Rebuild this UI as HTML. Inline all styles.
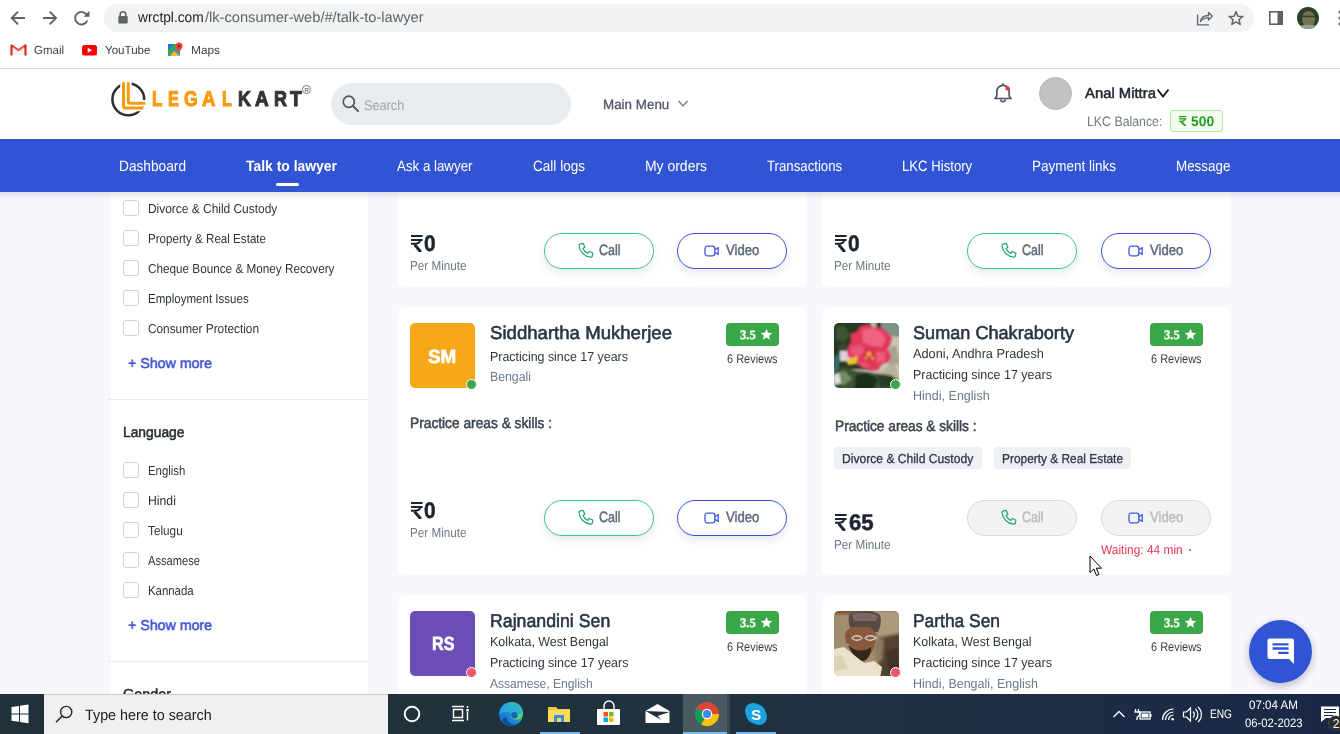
<!DOCTYPE html>
<html><head><meta charset="utf-8"><style>
html,body{margin:0;padding:0;width:1340px;height:734px;overflow:hidden;background:#f8f7fe;position:relative}
.t{position:absolute;white-space:nowrap;transform-origin:0 0;text-rendering:geometricPrecision}
.a{position:absolute}
</style></head><body>
<div style="position:absolute;left:0;top:0;width:1340px;height:68px;background:#fff"></div>
<div style="position:absolute;left:0;top:68px;width:1340px;height:1px;background:#d6d7d9"></div>
<div style="position:absolute;left:104px;top:4px;width:1150px;height:28px;border-radius:14px;background:#f1f3f4"></div>
<svg style="position:absolute;left:0;top:0" width="100" height="36" viewBox="0 0 100 36">
<g fill="none" stroke="#5f6368" stroke-width="1.9" stroke-linecap="butt">
<path d="M25 18H12.5 M18 11.7L11.7 18L18 24.3"/>
<path d="M43 18H55.5 M49.7 11.7L56 18L49.7 24.3"/>
<path d="M87.5 16.5A6.3 6.3 0 1 0 87.3 20.5"/>
</g>
<path d="M89.5 10.8V16.8H83.5Z" fill="#5f6368"/>
</svg>
<svg style="position:absolute;left:116px;top:10px" width="14" height="16" viewBox="0 0 14 16">
<path d="M4.2 6V4.6A2.8 2.8 0 0 1 9.8 4.6V6" fill="none" stroke="#5f6368" stroke-width="1.6"/>
<rect x="2.3" y="6" width="9.4" height="7.4" rx="1" fill="#5f6368"/></svg>
<div class="t" style="left:138.37px;top:11.48px;font:normal 14.50px/1 'Liberation Sans',sans-serif;color:#202124;transform:scaleX(0.9484);">wrctpl.com</div>
<div class="t" style="left:205.00px;top:11.48px;font:normal 14.50px/1 'Liberation Sans',sans-serif;color:#5f6368;transform:scaleX(1.0084);">/lk-consumer-web/#/talk-to-lawyer</div>
<svg style="position:absolute;left:1190px;top:0px" width="150" height="36" viewBox="1190 0 150 36">
<g fill="none" stroke="#5f6368" stroke-width="1.3">
<path d="M1197.6 14.5V24.8H1209"/>
<path d="M1200.3 21.5C1201 17.5 1204 15.5 1208.5 15.5V12.5L1212.3 16.3L1208.5 20V17.6C1205 17.6 1202.5 19 1200.3 21.5Z" stroke-linejoin="round"/>
</g>
<path d="M1236 11.6L1237.9 16.2L1242.8 16.5L1239 19.6L1240.2 24.4L1236 21.8L1231.8 24.4L1233 19.6L1229.2 16.5L1234.1 16.2Z" fill="none" stroke="#5f6368" stroke-width="1.5" stroke-linejoin="round"/>
<rect x="1269.8" y="11.8" width="12.4" height="12.4" fill="none" stroke="#5f6368" stroke-width="1.6"/>
<rect x="1277.5" y="11" width="5.5" height="14" fill="#5f6368"/>
<defs><clipPath id="pc"><circle cx="1308" cy="18" r="11"/></clipPath></defs>
<g clip-path="url(#pc)">
<rect x="1296" y="6" width="24" height="24" fill="#2c3f27"/>
<ellipse cx="1308.5" cy="19" rx="6.5" ry="8" fill="#76714f"/>
<path d="M1302 16.5H1315" stroke="#34402c" stroke-width="1.4"/>
<path d="M1297 27C1302 24 1314 24 1319 27V30H1297Z" fill="#8fa294"/>
</g>
<circle cx="1340" cy="12" r="1.6" fill="#5f6368"/><circle cx="1340" cy="18" r="1.6" fill="#5f6368"/><circle cx="1340" cy="24" r="1.6" fill="#5f6368"/>
</svg>
<svg style="position:absolute;left:8px;top:40px" width="190" height="20" viewBox="0 0 190 20">
<path d="M3.5 15.5V5.5L10.5 10.5L17.5 5.5V15.5" fill="none" stroke="#d93025" stroke-width="2.2" stroke-linejoin="round"/>
<path d="M5 6.5L10.5 10.5L16 6.5V15H5Z" fill="#e8e8e8" opacity="0.6"/>
<rect x="74" y="5" width="15" height="10.5" rx="2.5" fill="#ff0000"/>
<path d="M79.7 7.8V12.7L84 10.25Z" fill="#fff"/>
<path d="M160 4L172 4L172 16L160 16Z" fill="#34a853"/>
<path d="M160 16L167 9L172 14V16Z" fill="#4285f4"/>
<path d="M160 4L166 4L160 10Z" fill="#1a73e8"/>
<path d="M166 11L172 16H162Z" fill="#fbbc04"/>
<path d="M171 2.5A3.5 3.5 0 0 1 174.5 6C174.5 8.5 171 12 171 12S167.5 8.5 167.5 6A3.5 3.5 0 0 1 171 2.5Z" fill="#ea4335"/>
<circle cx="171" cy="6" r="1.2" fill="#a50e0e"/>
</svg>
<div class="t" style="left:34.30px;top:45.27px;font:normal 11.80px/1 'Liberation Sans',sans-serif;color:#3c4043;transform:scaleX(0.9741);">Gmail</div>
<div class="t" style="left:105.00px;top:45.27px;font:normal 11.80px/1 'Liberation Sans',sans-serif;color:#3c4043;transform:scaleX(0.9812);">YouTube</div>
<div class="t" style="left:191.00px;top:45.27px;font:normal 11.80px/1 'Liberation Sans',sans-serif;color:#3c4043;transform:scaleX(1.0052);">Maps</div>
<div class="a" style="left:0;top:69px;width:1340px;height:70px;background:#fff"></div>
<svg class="a" style="left:105px;top:76px" width="45" height="46" viewBox="105 76 45 46">
<circle cx="128.3" cy="99.3" r="15.9" fill="none" stroke="#303030" stroke-width="2.5"/>
<g fill="none" stroke="#fff" stroke-width="6.5" stroke-linejoin="round">
<path d="M123.5 80V108.1H143.5"/>
<path d="M128.3 80V103.3H146"/>
</g>
<g fill="none" stroke="#fb9a0e" stroke-width="3">
<path d="M123.5 82.3V106.1Q123.5 108.1 125.5 108.1H143.2"/>
<path d="M128.3 82.3V101.3Q128.3 103.3 130.3 103.3H145.4"/>
</g>
</svg>
<div class="t" style="left:151.85px;top:88.93px;font:bold 21.50px/1 'Liberation Sans',sans-serif;color:#fb9a0e;transform:scaleX(0.7930);-webkit-text-stroke:1.1px #fb9a0e;">L</div>
<div class="t" style="left:167.75px;top:88.93px;font:bold 21.50px/1 'Liberation Sans',sans-serif;color:#fb9a0e;transform:scaleX(0.7484);-webkit-text-stroke:1.1px #fb9a0e;">E</div>
<div class="t" style="left:183.55px;top:88.93px;font:bold 21.50px/1 'Liberation Sans',sans-serif;color:#fb9a0e;transform:scaleX(0.8110);-webkit-text-stroke:1.1px #fb9a0e;">G</div>
<div class="t" style="left:202.05px;top:88.93px;font:bold 21.50px/1 'Liberation Sans',sans-serif;color:#fb9a0e;transform:scaleX(0.8656);-webkit-text-stroke:1.1px #fb9a0e;">A</div>
<div class="t" style="left:221.55px;top:88.93px;font:bold 21.50px/1 'Liberation Sans',sans-serif;color:#fb9a0e;transform:scaleX(0.7472);-webkit-text-stroke:1.1px #fb9a0e;">L</div>
<div class="t" style="left:237.55px;top:88.93px;font:bold 21.50px/1 'Liberation Sans',sans-serif;color:#333333;transform:scaleX(0.8333);-webkit-text-stroke:1.1px #333333;">K</div>
<div class="t" style="left:254.55px;top:88.93px;font:bold 21.50px/1 'Liberation Sans',sans-serif;color:#333333;transform:scaleX(0.8786);-webkit-text-stroke:1.1px #333333;">A</div>
<div class="t" style="left:273.55px;top:88.93px;font:bold 21.50px/1 'Liberation Sans',sans-serif;color:#333333;transform:scaleX(0.8333);-webkit-text-stroke:1.1px #333333;">R</div>
<div class="t" style="left:290.15px;top:88.93px;font:bold 21.50px/1 'Liberation Sans',sans-serif;color:#333333;transform:scaleX(0.8845);-webkit-text-stroke:1.1px #333333;">T</div>
<svg class="a" style="left:301px;top:84px" width="11" height="11" viewBox="0 0 11 11"><circle cx="5.4" cy="5.5" r="4" fill="none" stroke="#444" stroke-width="0.7"/><text x="5.5" y="7.7" font-size="5.8" font-family="Liberation Sans" text-anchor="middle" fill="#444">R</text></svg>
<div class="a" style="left:331px;top:83px;width:240px;height:42px;border-radius:21px;background:#e9ecef"></div>
<svg class="a" style="left:340px;top:93px" width="22" height="22" viewBox="0 0 22 22"><circle cx="8.8" cy="8.8" r="5.6" fill="none" stroke="#4b5563" stroke-width="1.7"/><path d="M13 13L18 18" stroke="#4b5563" stroke-width="1.8" stroke-linecap="round"/></svg>
<div class="t" style="left:364.20px;top:98.10px;font:normal 14.00px/1 'Liberation Sans',sans-serif;color:#9ca3ab;transform:scaleX(0.9081);">Search</div>
<div class="t" style="left:603.00px;top:98.34px;font:normal 13.60px/1 'Liberation Sans',sans-serif;color:#4a5361;transform:scaleX(0.9858);font-weight:normal;-webkit-text-stroke:0.25px #4a5361;">Main Menu</div>
<svg class="a" style="left:676px;top:98px" width="14" height="12" viewBox="0 0 14 12"><path d="M2.5 3L7 7.8L11.5 3" fill="none" stroke="#6b7280" stroke-width="1.2"/></svg>
<svg class="a" style="left:990px;top:80px" width="26" height="26" viewBox="0 0 26 26">
<path d="M5 18.5H21L19.2 16.2V11.5A6.2 6.2 0 0 0 6.8 11.5V16.2Z" fill="none" stroke="#4b5563" stroke-width="1.7" stroke-linejoin="round"/>
<path d="M10.8 19.5A2.2 2.2 0 0 0 15.2 19.5" fill="none" stroke="#4b5563" stroke-width="1.6"/>
<path d="M13 3.2V5" stroke="#4b5563" stroke-width="1.6"/>
<circle cx="17.6" cy="8.4" r="2.2" fill="#e53945"/>
</svg>
<div class="a" style="left:1039px;top:77px;width:31px;height:31px;border-radius:50%;background:#c2c2c4;border:1px solid #b5b5b8"></div>
<div class="t" style="left:1085.00px;top:87.27px;font:normal 14.50px/1 'Liberation Sans',sans-serif;color:#1f2733;transform:scaleX(1.0233);-webkit-text-stroke:0.5px #1f2733;">Anal Mittra</div>
<svg class="a" style="left:1155px;top:86px" width="16" height="14" viewBox="0 0 16 14"><path d="M2.5 3.5L8 10.5L13.5 3.5" fill="none" stroke="#111" stroke-width="1.8"/></svg>
<div class="t" style="left:1086.60px;top:115.27px;font:normal 13.80px/1 'Liberation Sans',sans-serif;color:#737b86;transform:scaleX(0.8935);">LKC Balance:</div>
<div class="a" style="left:1170px;top:110px;width:51px;height:20px;border-radius:3px;border:1px solid #b2e9a0;background:#f5fdf0"></div>
<svg class="a" style="left:1178.8px;top:116px" width="8" height="10" viewBox="0 0 8 10">
<path d="M0 0.6H7.3M0 2.9H7.3" stroke="#2a9a16" stroke-width="1.2"/>
<path d="M0 5.3H2.5C4.5 5.3 5.6 4.4 5.7 2.9" fill="none" stroke="#2a9a16" stroke-width="1.2"/>
<path d="M2.2 5.8L6.6 10" stroke="#2a9a16" stroke-width="1.8"/>
</svg>
<div class="t" style="left:1191.00px;top:114.10px;font:bold 14.00px/1 'Liberation Sans',sans-serif;color:#279d1e;transform:scaleX(0.9880);">500</div>
<div class="a" style="left:111px;top:192px;width:257px;height:502px;background:#fff"></div>
<div class="a" style="left:123px;top:200px;width:14px;height:14px;border:1px solid #cfd2d6;border-radius:3px;background:#fff"></div>
<div class="t" style="left:148.00px;top:201.95px;font:normal 13.00px/1 'Liberation Sans',sans-serif;color:#2d333a;transform:scaleX(0.9175);">Divorce &amp; Child Custody</div>
<div class="a" style="left:123px;top:230px;width:14px;height:14px;border:1px solid #cfd2d6;border-radius:3px;background:#fff"></div>
<div class="t" style="left:148.00px;top:231.95px;font:normal 13.00px/1 'Liberation Sans',sans-serif;color:#2d333a;transform:scaleX(0.8925);">Property &amp; Real Estate</div>
<div class="a" style="left:123px;top:260px;width:14px;height:14px;border:1px solid #cfd2d6;border-radius:3px;background:#fff"></div>
<div class="t" style="left:148.00px;top:261.95px;font:normal 13.00px/1 'Liberation Sans',sans-serif;color:#2d333a;transform:scaleX(0.9023);">Cheque Bounce &amp; Money Recovery</div>
<div class="a" style="left:123px;top:290px;width:14px;height:14px;border:1px solid #cfd2d6;border-radius:3px;background:#fff"></div>
<div class="t" style="left:148.00px;top:291.95px;font:normal 13.00px/1 'Liberation Sans',sans-serif;color:#2d333a;transform:scaleX(0.8878);">Employment Issues</div>
<div class="a" style="left:123px;top:320px;width:14px;height:14px;border:1px solid #cfd2d6;border-radius:3px;background:#fff"></div>
<div class="t" style="left:148.00px;top:321.95px;font:normal 13.00px/1 'Liberation Sans',sans-serif;color:#2d333a;transform:scaleX(0.9088);">Consumer Protection</div>
<div class="t" style="left:128.00px;top:356.93px;font:normal 14.20px/1 'Liberation Sans',sans-serif;color:#3d4fd6;-webkit-text-stroke:0.45px #3d4fd6;">+ Show more</div>
<div class="a" style="left:108px;top:399px;width:262px;height:1px;background:#ececef"></div>
<div class="t" style="left:123.00px;top:425.68px;font:normal 14.50px/1 'Liberation Sans',sans-serif;color:#262b33;transform:scaleX(0.9531);-webkit-text-stroke:0.5px #262b33;">Language</div>
<div class="a" style="left:123px;top:462px;width:14px;height:14px;border:1px solid #cfd2d6;border-radius:3px;background:#fff"></div>
<div class="t" style="left:147.70px;top:463.95px;font:normal 13.00px/1 'Liberation Sans',sans-serif;color:#2d333a;transform:scaleX(0.8748);">English</div>
<div class="a" style="left:123px;top:492px;width:14px;height:14px;border:1px solid #cfd2d6;border-radius:3px;background:#fff"></div>
<div class="t" style="left:147.70px;top:493.95px;font:normal 13.00px/1 'Liberation Sans',sans-serif;color:#2d333a;transform:scaleX(0.9413);">Hindi</div>
<div class="a" style="left:123px;top:522px;width:14px;height:14px;border:1px solid #cfd2d6;border-radius:3px;background:#fff"></div>
<div class="t" style="left:147.70px;top:523.95px;font:normal 13.00px/1 'Liberation Sans',sans-serif;color:#2d333a;transform:scaleX(0.9064);">Telugu</div>
<div class="a" style="left:123px;top:552px;width:14px;height:14px;border:1px solid #cfd2d6;border-radius:3px;background:#fff"></div>
<div class="t" style="left:147.70px;top:553.95px;font:normal 13.00px/1 'Liberation Sans',sans-serif;color:#2d333a;transform:scaleX(0.8565);">Assamese</div>
<div class="a" style="left:123px;top:582px;width:14px;height:14px;border:1px solid #cfd2d6;border-radius:3px;background:#fff"></div>
<div class="t" style="left:147.70px;top:583.95px;font:normal 13.00px/1 'Liberation Sans',sans-serif;color:#2d333a;transform:scaleX(0.8767);">Kannada</div>
<div class="t" style="left:128.00px;top:618.93px;font:normal 14.20px/1 'Liberation Sans',sans-serif;color:#3d4fd6;-webkit-text-stroke:0.45px #3d4fd6;">+ Show more</div>
<div class="a" style="left:108px;top:661px;width:262px;height:1px;background:#ececef"></div>
<div class="t" style="left:123.00px;top:687.67px;font:normal 14.50px/1 'Liberation Sans',sans-serif;color:#262b33;transform:scaleX(0.9926);-webkit-text-stroke:0.5px #262b33;">Gender</div>
<div class="a" style="left:398px;top:150px;width:409px;height:137px;background:#fff;border-radius:7px"></div>
<div class="a" style="left:822px;top:150px;width:409px;height:137px;background:#fff;border-radius:7px"></div>
<svg class="a" style="left:411.2px;top:235px" width="12" height="17" viewBox="0 0 12 17">
<path d="M0 1H11.6M0 4.9H11.6" stroke="#1c2530" stroke-width="2"/>
<path d="M0 8.8H4C7 8.8 9 7.6 9.2 4.9" fill="none" stroke="#1c2530" stroke-width="2"/>
<path d="M3.6 9.6L9.8 17" stroke="#1c2530" stroke-width="3"/>
</svg>
<div class="t" style="left:424.20px;top:233.38px;font:bold 22.50px/1 'Liberation Sans',sans-serif;color:#1c2530;transform:scaleX(0.9289);-webkit-text-stroke:0.5px #1c2530;">0</div>
<div class="t" style="left:410.20px;top:258.95px;font:normal 13.00px/1 'Liberation Sans',sans-serif;color:#6b7886;transform:scaleX(0.8989);">Per Minute</div>
<div class="a" style="left:544px;top:233px;width:108px;height:34px;border:1px solid #38c499;border-radius:18px;background:#fff;box-shadow:0 4px 9px rgba(30,40,80,0.10)"></div>
<div class="a" style="left:677px;top:233px;width:108px;height:34px;border:1px solid #3653d6;border-radius:18px;background:#fff;box-shadow:0 4px 9px rgba(30,40,80,0.10)"></div>
<svg class="a" style="left:576.5px;top:242px" width="18" height="18" viewBox="0 0 16 16"><path d="M3.2 1.6L5.6 1.3L7 4.6L5.3 5.8C6.1 7.6 7.6 9.2 9.6 10.1L10.8 8.4L14 9.8L13.7 12.3C13.5 13.1 12.8 13.6 12 13.5C6.8 13 2.3 8.6 1.8 3.2C1.7 2.4 2.3 1.7 3.2 1.6Z" fill="none" stroke="#27a57c" stroke-width="1.1" stroke-linejoin="round"/></svg>
<div class="t" style="left:599.00px;top:243.25px;font:normal 15.00px/1 'Liberation Sans',sans-serif;color:#5d6b7a;transform:scaleX(0.8309);-webkit-text-stroke:0.5px #5d6b7a;">Call</div>
<svg class="a" style="left:703px;top:243px" width="17" height="16" viewBox="0 0 15 16"><rect x="1" y="3.2" width="9.8" height="9.6" rx="2.2" fill="none" stroke="#3e5ad8" stroke-width="1.3"/><path d="M10.8 6.8L14.2 4.6V11.4L10.8 9.2" fill="none" stroke="#3e5ad8" stroke-width="1.3" stroke-linejoin="round"/></svg>
<div class="t" style="left:726.00px;top:243.25px;font:normal 15.00px/1 'Liberation Sans',sans-serif;color:#5d6b7a;transform:scaleX(0.8714);-webkit-text-stroke:0.5px #5d6b7a;">Video</div>
<svg class="a" style="left:835.2px;top:235px" width="12" height="17" viewBox="0 0 12 17">
<path d="M0 1H11.6M0 4.9H11.6" stroke="#1c2530" stroke-width="2"/>
<path d="M0 8.8H4C7 8.8 9 7.6 9.2 4.9" fill="none" stroke="#1c2530" stroke-width="2"/>
<path d="M3.6 9.6L9.8 17" stroke="#1c2530" stroke-width="3"/>
</svg>
<div class="t" style="left:848.20px;top:233.38px;font:bold 22.50px/1 'Liberation Sans',sans-serif;color:#1c2530;transform:scaleX(0.9289);-webkit-text-stroke:0.5px #1c2530;">0</div>
<div class="t" style="left:834.20px;top:258.95px;font:normal 13.00px/1 'Liberation Sans',sans-serif;color:#6b7886;transform:scaleX(0.8989);">Per Minute</div>
<div class="a" style="left:967px;top:233px;width:108px;height:34px;border:1px solid #38c499;border-radius:18px;background:#fff;box-shadow:0 4px 9px rgba(30,40,80,0.10)"></div>
<div class="a" style="left:1101px;top:233px;width:108px;height:34px;border:1px solid #3653d6;border-radius:18px;background:#fff;box-shadow:0 4px 9px rgba(30,40,80,0.10)"></div>
<svg class="a" style="left:999.5px;top:242px" width="18" height="18" viewBox="0 0 16 16"><path d="M3.2 1.6L5.6 1.3L7 4.6L5.3 5.8C6.1 7.6 7.6 9.2 9.6 10.1L10.8 8.4L14 9.8L13.7 12.3C13.5 13.1 12.8 13.6 12 13.5C6.8 13 2.3 8.6 1.8 3.2C1.7 2.4 2.3 1.7 3.2 1.6Z" fill="none" stroke="#27a57c" stroke-width="1.1" stroke-linejoin="round"/></svg>
<div class="t" style="left:1022.00px;top:243.25px;font:normal 15.00px/1 'Liberation Sans',sans-serif;color:#5d6b7a;transform:scaleX(0.8309);-webkit-text-stroke:0.5px #5d6b7a;">Call</div>
<svg class="a" style="left:1127px;top:243px" width="17" height="16" viewBox="0 0 15 16"><rect x="1" y="3.2" width="9.8" height="9.6" rx="2.2" fill="none" stroke="#3e5ad8" stroke-width="1.3"/><path d="M10.8 6.8L14.2 4.6V11.4L10.8 9.2" fill="none" stroke="#3e5ad8" stroke-width="1.3" stroke-linejoin="round"/></svg>
<div class="t" style="left:1150.00px;top:243.25px;font:normal 15.00px/1 'Liberation Sans',sans-serif;color:#5d6b7a;transform:scaleX(0.8714);-webkit-text-stroke:0.5px #5d6b7a;">Video</div>
<div class="a" style="left:398px;top:307px;width:409px;height:268px;background:#fff;border-radius:7px"></div>
<div class="a" style="left:822px;top:307px;width:409px;height:268px;background:#fff;border-radius:7px"></div>
<div class="a" style="left:410px;top:323px;width:65px;height:65px;border-radius:5px;background:#f6a819"></div>
<div class="t" style="left:428.00px;top:347.85px;font:bold 19.00px/1 'Liberation Sans',sans-serif;color:#fff;transform:scaleX(0.9930);-webkit-text-stroke:0.6px #fff;">SM</div>
<div class="a" style="left:465.8px;top:378.9px;width:9px;height:9px;border-radius:50%;background:#3aa848;border:1px solid #fff"></div>
<div class="t" style="left:489.60px;top:323.57px;font:normal 18.50px/1 'Liberation Sans',sans-serif;color:#273444;transform:scaleX(1.0054);-webkit-text-stroke:0.55px #273444;">Siddhartha Mukherjee</div>
<div class="t" style="left:489.60px;top:349.98px;font:normal 13.20px/1 'Liberation Sans',sans-serif;color:#2e3640;transform:scaleX(0.9406);">Practicing since 17 years</div>
<div class="t" style="left:489.60px;top:370.38px;font:normal 13.20px/1 'Liberation Sans',sans-serif;color:#6b7a8c;transform:scaleX(0.9314);">Bengali</div>
<div class="a" style="left:726px;top:323px;width:53px;height:23px;border-radius:4px;background:#3aa849"></div>
<div class="t" style="left:740.00px;top:328.72px;font:bold 12.80px/1 'Liberation Serif',serif;color:#fff;transform:scaleX(0.9875);-webkit-text-stroke:0.35px #fff;">3.5</div>
<svg class="a" style="left:760px;top:328px" width="13" height="13" viewBox="0 0 24 24"><path d="M12 1.5L15 8.6L22.6 9.2L16.8 14.2L18.6 21.6L12 17.6L5.4 21.6L7.2 14.2L1.4 9.2L9 8.6Z" fill="#fff"/></svg>
<div class="t" style="left:727.40px;top:352.98px;font:normal 12.50px/1 'Liberation Sans',sans-serif;color:#333b45;transform:scaleX(0.8771);">6 Reviews</div>
<div class="t" style="left:410.20px;top:416.45px;font:normal 15.00px/1 'Liberation Sans',sans-serif;color:#3a434d;transform:scaleX(0.9160);-webkit-text-stroke:0.5px #3a434d;">Practice areas &amp; skills :</div>
<svg class="a" style="left:411.2px;top:502px" width="12" height="17" viewBox="0 0 12 17">
<path d="M0 1H11.6M0 4.9H11.6" stroke="#1c2530" stroke-width="2"/>
<path d="M0 8.8H4C7 8.8 9 7.6 9.2 4.9" fill="none" stroke="#1c2530" stroke-width="2"/>
<path d="M3.6 9.6L9.8 17" stroke="#1c2530" stroke-width="3"/>
</svg>
<div class="t" style="left:424.20px;top:500.38px;font:bold 22.50px/1 'Liberation Sans',sans-serif;color:#1c2530;transform:scaleX(0.9289);-webkit-text-stroke:0.5px #1c2530;">0</div>
<div class="t" style="left:410.20px;top:525.95px;font:normal 13.00px/1 'Liberation Sans',sans-serif;color:#6b7886;transform:scaleX(0.8989);">Per Minute</div>
<div class="a" style="left:544px;top:500px;width:108px;height:34px;border:1px solid #38c499;border-radius:18px;background:#fff;box-shadow:0 4px 9px rgba(30,40,80,0.10)"></div>
<div class="a" style="left:677px;top:500px;width:108px;height:34px;border:1px solid #3653d6;border-radius:18px;background:#fff;box-shadow:0 4px 9px rgba(30,40,80,0.10)"></div>
<svg class="a" style="left:576.5px;top:509px" width="18" height="18" viewBox="0 0 16 16"><path d="M3.2 1.6L5.6 1.3L7 4.6L5.3 5.8C6.1 7.6 7.6 9.2 9.6 10.1L10.8 8.4L14 9.8L13.7 12.3C13.5 13.1 12.8 13.6 12 13.5C6.8 13 2.3 8.6 1.8 3.2C1.7 2.4 2.3 1.7 3.2 1.6Z" fill="none" stroke="#27a57c" stroke-width="1.1" stroke-linejoin="round"/></svg>
<div class="t" style="left:599.00px;top:510.25px;font:normal 15.00px/1 'Liberation Sans',sans-serif;color:#5d6b7a;transform:scaleX(0.8309);-webkit-text-stroke:0.5px #5d6b7a;">Call</div>
<svg class="a" style="left:703px;top:510px" width="17" height="16" viewBox="0 0 15 16"><rect x="1" y="3.2" width="9.8" height="9.6" rx="2.2" fill="none" stroke="#3e5ad8" stroke-width="1.3"/><path d="M10.8 6.8L14.2 4.6V11.4L10.8 9.2" fill="none" stroke="#3e5ad8" stroke-width="1.3" stroke-linejoin="round"/></svg>
<div class="t" style="left:726.00px;top:510.25px;font:normal 15.00px/1 'Liberation Sans',sans-serif;color:#5d6b7a;transform:scaleX(0.8714);-webkit-text-stroke:0.5px #5d6b7a;">Video</div>
<svg class="a" style="left:834px;top:323px" width="65" height="65" viewBox="0 0 65 65">
<defs><clipPath id="cp1"><rect width="65" height="65" rx="5"/></clipPath>
<filter id="bl1" x="-10%" y="-10%" width="120%" height="120%"><feGaussianBlur stdDeviation="1.3"/></filter>
<filter id="bl0" x="-10%" y="-10%" width="120%" height="120%"><feGaussianBlur stdDeviation="0.8"/></filter></defs>
<g clip-path="url(#cp1)">
<rect width="65" height="65" fill="#bdb6a6"/>
<g filter="url(#bl1)">
<path d="M-2 -2H36V46H-2Z" fill="#263822"/>
<path d="M2 4L10 2L16 12L10 20L2 16Z" fill="#3a5434"/>
<path d="M4 22L12 20L14 28L6 30Z" fill="#344a2e"/>
<path d="M40 -2H67V14L58 16L50 10L44 8Z" fill="#7f9383"/>
<path d="M43 -2H47V12H43Z" fill="#2f2b26"/>
<path d="M38 12L67 14V67H38Z" fill="#cbc4b3"/>
<path d="M50 28L62 22L66 40L56 44Z" fill="#a9a190"/>
<path d="M46 50L60 40L66 56L52 62Z" fill="#b8af9c"/>
<path d="M6 28H20V38H6Z" fill="#d4d4d8"/>
<path d="M0 34L5 30V48H0Z" fill="#356b66"/>
<path d="M0 48L10 44L22 48L40 50L56 52L66 58V67H-2Z" fill="#3a5532"/>
<path d="M3 50L11 48L18 56L10 62L3 60Z" fill="#718e62"/>
<path d="M0 52L5 50L7 60L0 62Z" fill="#dfe2de"/>
<path d="M22 52L34 50L44 56L40 67H20Z" fill="#1c2f1b"/>
<path d="M44 52L58 54L62 64H46Z" fill="#283c25"/>
</g>
<g filter="url(#bl0)">
<path d="M26 3L34 1L40 5L47 4L53 9L58 15L56 22L53 27L57 33L54 39L48 41L44 47L37 48L31 45L25 43L19 37L14 33L13 25L17 18L16 11L22 9Z" fill="#e2385a"/>
<path d="M28 7L37 5L46 8L52 16L48 24L38 23L29 19Z" fill="#ef6482"/>
<path d="M17 24L27 21L31 29L23 34L17 31Z" fill="#ea5676"/>
<path d="M41 29L51 29L51 38L43 40Z" fill="#ec5b7c"/>
<path d="M24 38L34 40L36 46L28 45Z" fill="#e84d6e"/>
<path d="M31 25L39 27L43 35L35 39L29 33Z" fill="#cf2e4a"/>
<circle cx="35" cy="31" r="2.6" fill="#f0a43c"/>
<circle cx="38.5" cy="35" r="1.5" fill="#f3b23c"/>
<circle cx="32" cy="35" r="1.2" fill="#f0a43c"/>
<path d="M12 37L24 33L22 41L14 42Z" fill="#f0c62e"/>
</g>
</g></svg>
<div class="a" style="left:890.0px;top:378.9px;width:9px;height:9px;border-radius:50%;background:#3aa848;border:1px solid #fff"></div>
<div class="t" style="left:913.40px;top:323.57px;font:normal 18.50px/1 'Liberation Sans',sans-serif;color:#273444;transform:scaleX(0.9784);-webkit-text-stroke:0.55px #273444;">Suman Chakraborty</div>
<div class="t" style="left:913.40px;top:347.18px;font:normal 13.20px/1 'Liberation Sans',sans-serif;color:#2e3640;transform:scaleX(0.9649);">Adoni, Andhra Pradesh</div>
<div class="t" style="left:913.40px;top:367.78px;font:normal 13.20px/1 'Liberation Sans',sans-serif;color:#2e3640;transform:scaleX(0.9474);">Practicing since 17 years</div>
<div class="t" style="left:913.40px;top:388.78px;font:normal 13.20px/1 'Liberation Sans',sans-serif;color:#6b7a8c;transform:scaleX(0.9502);">Hindi, English</div>
<div class="a" style="left:1150px;top:323px;width:53px;height:23px;border-radius:4px;background:#3aa849"></div>
<div class="t" style="left:1164.00px;top:328.72px;font:bold 12.80px/1 'Liberation Serif',serif;color:#fff;transform:scaleX(0.9875);-webkit-text-stroke:0.35px #fff;">3.5</div>
<svg class="a" style="left:1184px;top:328px" width="13" height="13" viewBox="0 0 24 24"><path d="M12 1.5L15 8.6L22.6 9.2L16.8 14.2L18.6 21.6L12 17.6L5.4 21.6L7.2 14.2L1.4 9.2L9 8.6Z" fill="#fff"/></svg>
<div class="t" style="left:1151.40px;top:352.98px;font:normal 12.50px/1 'Liberation Sans',sans-serif;color:#333b45;transform:scaleX(0.8771);">6 Reviews</div>
<div class="t" style="left:834.50px;top:419.05px;font:normal 15.00px/1 'Liberation Sans',sans-serif;color:#3a434d;transform:scaleX(0.9128);-webkit-text-stroke:0.5px #3a434d;">Practice areas &amp; skills :</div>
<div class="a" style="left:834px;top:447px;width:148px;height:22px;border-radius:4px;background:#eef0f5"></div>
<div class="a" style="left:994px;top:447px;width:137px;height:22px;border-radius:4px;background:#eef0f5"></div>
<div class="t" style="left:842.20px;top:451.95px;font:normal 13.00px/1 'Liberation Sans',sans-serif;color:#2e3640;transform:scaleX(0.9317);-webkit-text-stroke:0.3px #2e3640;">Divorce &amp; Child Custody</div>
<div class="t" style="left:1002.00px;top:451.95px;font:normal 13.00px/1 'Liberation Sans',sans-serif;color:#2e3640;transform:scaleX(0.9152);-webkit-text-stroke:0.3px #2e3640;">Property &amp; Real Estate</div>
<svg class="a" style="left:835.2px;top:514px" width="12" height="17" viewBox="0 0 12 17">
<path d="M0 1H11.6M0 4.9H11.6" stroke="#1c2530" stroke-width="2"/>
<path d="M0 8.8H4C7 8.8 9 7.6 9.2 4.9" fill="none" stroke="#1c2530" stroke-width="2"/>
<path d="M3.6 9.6L9.8 17" stroke="#1c2530" stroke-width="3"/>
</svg>
<div class="t" style="left:848.80px;top:512.38px;font:bold 22.50px/1 'Liberation Sans',sans-serif;color:#1c2530;transform:scaleX(0.9850);-webkit-text-stroke:0.5px #1c2530;">65</div>
<div class="t" style="left:834.20px;top:537.55px;font:normal 13.00px/1 'Liberation Sans',sans-serif;color:#6b7886;transform:scaleX(0.8989);">Per Minute</div>
<div class="a" style="left:967px;top:500px;width:108px;height:34px;border:1px solid #dadada;border-radius:18px;background:#f3f3f3"></div>
<div class="a" style="left:1101px;top:500px;width:108px;height:34px;border:1px solid #dadada;border-radius:18px;background:#f3f3f3"></div>
<svg class="a" style="left:999.5px;top:509px" width="18" height="18" viewBox="0 0 16 16"><path d="M3.2 1.6L5.6 1.3L7 4.6L5.3 5.8C6.1 7.6 7.6 9.2 9.6 10.1L10.8 8.4L14 9.8L13.7 12.3C13.5 13.1 12.8 13.6 12 13.5C6.8 13 2.3 8.6 1.8 3.2C1.7 2.4 2.3 1.7 3.2 1.6Z" fill="none" stroke="#27a57c" stroke-width="1.1" stroke-linejoin="round"/></svg>
<div class="t" style="left:1022.00px;top:510.25px;font:normal 15.00px/1 'Liberation Sans',sans-serif;color:#b9bdc3;transform:scaleX(0.8309);-webkit-text-stroke:0.5px #b9bdc3;">Call</div>
<svg class="a" style="left:1127px;top:510px" width="17" height="16" viewBox="0 0 15 16"><rect x="1" y="3.2" width="9.8" height="9.6" rx="2.2" fill="none" stroke="#3e5ad8" stroke-width="1.3"/><path d="M10.8 6.8L14.2 4.6V11.4L10.8 9.2" fill="none" stroke="#3e5ad8" stroke-width="1.3" stroke-linejoin="round"/></svg>
<div class="t" style="left:1150.00px;top:510.25px;font:normal 15.00px/1 'Liberation Sans',sans-serif;color:#b9bdc3;transform:scaleX(0.8714);-webkit-text-stroke:0.5px #b9bdc3;">Video</div>
<div class="t" style="left:1101.30px;top:544.12px;font:normal 12.80px/1 'Liberation Sans',sans-serif;color:#e8354f;transform:scaleX(0.9311);">Waiting: 44 min</div>
<div class="a" style="left:1189px;top:549px;width:2px;height:2px;border-radius:1px;background:#e8354f"></div>
<div class="a" style="left:398px;top:595px;width:409px;height:140px;background:#fff;border-radius:7px"></div>
<div class="a" style="left:822px;top:595px;width:409px;height:140px;background:#fff;border-radius:7px"></div>
<div class="a" style="left:410px;top:611px;width:65px;height:65px;border-radius:5px;background:#6a4db5"></div>
<div class="t" style="left:431.60px;top:634.85px;font:bold 19.00px/1 'Liberation Sans',sans-serif;color:#fff;transform:scaleX(0.8520);-webkit-text-stroke:0.6px #fff;">RS</div>
<div class="a" style="left:465.7px;top:666.9px;width:9px;height:9px;border-radius:50%;background:#f0576a;border:1px solid #fff"></div>
<div class="t" style="left:489.60px;top:611.77px;font:normal 18.50px/1 'Liberation Sans',sans-serif;color:#273444;transform:scaleX(0.9584);-webkit-text-stroke:0.55px #273444;">Rajnandini Sen</div>
<div class="t" style="left:489.60px;top:635.18px;font:normal 13.20px/1 'Liberation Sans',sans-serif;color:#2e3640;transform:scaleX(0.9421);">Kolkata, West Bengal</div>
<div class="t" style="left:489.60px;top:656.08px;font:normal 13.20px/1 'Liberation Sans',sans-serif;color:#2e3640;transform:scaleX(0.9440);">Practicing since 17 years</div>
<div class="t" style="left:489.60px;top:676.98px;font:normal 13.20px/1 'Liberation Sans',sans-serif;color:#6b7a8c;transform:scaleX(0.9148);">Assamese, English</div>
<div class="a" style="left:726px;top:611px;width:53px;height:23px;border-radius:4px;background:#3aa849"></div>
<div class="t" style="left:740.00px;top:616.72px;font:bold 12.80px/1 'Liberation Serif',serif;color:#fff;transform:scaleX(0.9875);-webkit-text-stroke:0.35px #fff;">3.5</div>
<svg class="a" style="left:760px;top:616px" width="13" height="13" viewBox="0 0 24 24"><path d="M12 1.5L15 8.6L22.6 9.2L16.8 14.2L18.6 21.6L12 17.6L5.4 21.6L7.2 14.2L1.4 9.2L9 8.6Z" fill="#fff"/></svg>
<div class="t" style="left:727.40px;top:640.98px;font:normal 12.50px/1 'Liberation Sans',sans-serif;color:#333b45;transform:scaleX(0.8771);">6 Reviews</div>
<svg class="a" style="left:834px;top:611px" width="65" height="65" viewBox="0 0 65 65">
<defs><clipPath id="cp2"><rect width="65" height="65" rx="5"/></clipPath>
<filter id="bl2" x="-10%" y="-10%" width="120%" height="120%"><feGaussianBlur stdDeviation="1.6"/></filter>
<filter id="bl3" x="-10%" y="-10%" width="120%" height="120%"><feGaussianBlur stdDeviation="0.7"/></filter></defs>
<g clip-path="url(#cp2)">
<rect width="65" height="65" fill="#a38b6e"/>
<g filter="url(#bl2)">
<path d="M-2 -2H67V3H-2Z" fill="#7e5028"/>
<path d="M40 0H67V28L50 30L42 20Z" fill="#b09a7e"/>
<path d="M46 26L67 22V67H46C44 52 44 38 46 26Z" fill="#55432f"/>
<path d="M52 40L64 36L66 60L54 62Z" fill="#3f3026"/>
<path d="M40 30L50 28L48 50L42 48Z" fill="#8f7a62"/>
</g>
<g filter="url(#bl3)">
<path d="M15 4C20 -1 40 -1 46 4C48 10 46 17 44 21L18 21C15 16 14 10 15 4Z" fill="#584846"/>
<path d="M18 3C26 1 36 1 44 5L42 10L20 10Z" fill="#7a6864"/>
<path d="M12 20C13 32 18 44 28 48C36 47 42 38 42 22L36 16L18 16Z" fill="#8a5a3d"/>
<path d="M11 22L16 21L16 33L12 32Z" fill="#865439"/>
<path d="M14 34C18 44 24 50 30 50C35 48 37 42 37 36C31 41 21 41 14 34Z" fill="#35251e"/>
<path d="M18 27C20 24 26 24 28 27C26 30 20 30 18 27ZM31 27C33 24 39 24 42 27C39 30 33 30 31 27Z" fill="none" stroke="#d2d0d0" stroke-width="1.3"/>
<path d="M0 38L10 36L20 44L30 52L40 50L48 56L46 67H-2Z" fill="#ece2cb"/>
<path d="M0 46L8 44L14 58L0 60Z" fill="#ddd1b8"/>
</g>
</g></svg>
<div class="a" style="left:890.0px;top:666.9px;width:9px;height:9px;border-radius:50%;background:#f0576a;border:1px solid #fff"></div>
<div class="t" style="left:913.00px;top:612.07px;font:normal 18.50px/1 'Liberation Sans',sans-serif;color:#273444;transform:scaleX(0.9396);-webkit-text-stroke:0.55px #273444;">Partha Sen</div>
<div class="t" style="left:913.00px;top:635.18px;font:normal 13.20px/1 'Liberation Sans',sans-serif;color:#2e3640;transform:scaleX(0.9421);">Kolkata, West Bengal</div>
<div class="t" style="left:913.00px;top:656.08px;font:normal 13.20px/1 'Liberation Sans',sans-serif;color:#2e3640;transform:scaleX(0.9474);">Practicing since 17 years</div>
<div class="t" style="left:913.00px;top:676.98px;font:normal 13.20px/1 'Liberation Sans',sans-serif;color:#6b7a8c;transform:scaleX(0.9465);">Hindi, Bengali, English</div>
<div class="a" style="left:1150px;top:611px;width:53px;height:23px;border-radius:4px;background:#3aa849"></div>
<div class="t" style="left:1164.00px;top:616.72px;font:bold 12.80px/1 'Liberation Serif',serif;color:#fff;transform:scaleX(0.9875);-webkit-text-stroke:0.35px #fff;">3.5</div>
<svg class="a" style="left:1184px;top:616px" width="13" height="13" viewBox="0 0 24 24"><path d="M12 1.5L15 8.6L22.6 9.2L16.8 14.2L18.6 21.6L12 17.6L5.4 21.6L7.2 14.2L1.4 9.2L9 8.6Z" fill="#fff"/></svg>
<div class="t" style="left:1151.40px;top:640.98px;font:normal 12.50px/1 'Liberation Sans',sans-serif;color:#333b45;transform:scaleX(0.8771);">6 Reviews</div>
<div class="a" style="left:1249px;top:620px;width:63px;height:63px;border-radius:50%;background:#2f55d4;box-shadow:0 3px 8px rgba(0,0,40,0.25)"></div>
<svg class="a" style="left:1266px;top:637px" width="30" height="30" viewBox="0 0 30 30">
<path d="M3.5 1.5H26A2 2 0 0 1 28 3.5V27L23 22H3.5A2 2 0 0 1 1.5 20V3.5A2 2 0 0 1 3.5 1.5Z" fill="#fff"/>
<path d="M6.6 7.3H22.6M6.6 11.5H22.6M12.3 15.9H22.6" stroke="#2f55d4" stroke-width="2.3"/>
</svg>
<div class="a" style="left:0;top:139px;width:1340px;height:53px;background:#3054d4"></div>
<div class="a" style="left:0;top:192px;width:1340px;height:8px;background:linear-gradient(rgba(40,40,60,0.11),rgba(40,40,60,0))"></div>
<div class="t" style="left:118.90px;top:159.15px;font:normal 15.00px/1 'Liberation Sans',sans-serif;color:#ffffff;transform:scaleX(0.9134);">Dashboard</div>
<div class="t" style="left:245.90px;top:159.15px;font:bold 15.00px/1 'Liberation Sans',sans-serif;color:#ffffff;transform:scaleX(0.9276);">Talk to lawyer</div>
<div class="t" style="left:397.00px;top:159.15px;font:normal 15.00px/1 'Liberation Sans',sans-serif;color:#ffffff;transform:scaleX(0.8877);">Ask a lawyer</div>
<div class="t" style="left:532.80px;top:159.15px;font:normal 15.00px/1 'Liberation Sans',sans-serif;color:#ffffff;transform:scaleX(0.9040);">Call logs</div>
<div class="t" style="left:644.80px;top:159.15px;font:normal 15.00px/1 'Liberation Sans',sans-serif;color:#ffffff;transform:scaleX(0.9299);">My orders</div>
<div class="t" style="left:766.70px;top:159.15px;font:normal 15.00px/1 'Liberation Sans',sans-serif;color:#ffffff;transform:scaleX(0.8811);">Transactions</div>
<div class="t" style="left:902.00px;top:159.15px;font:normal 15.00px/1 'Liberation Sans',sans-serif;color:#ffffff;transform:scaleX(0.8772);">LKC History</div>
<div class="t" style="left:1032.30px;top:159.15px;font:normal 15.00px/1 'Liberation Sans',sans-serif;color:#ffffff;transform:scaleX(0.8996);">Payment links</div>
<div class="t" style="left:1176.40px;top:159.15px;font:normal 15.00px/1 'Liberation Sans',sans-serif;color:#ffffff;transform:scaleX(0.8933);">Message</div>
<div class="a" style="left:276px;top:183px;width:23px;height:3px;border-radius:2px;background:#fff"></div>
<div class="a" style="left:0;top:694px;width:1340px;height:40px;background:linear-gradient(90deg,#1f3139 0%,#20323d 50%,#1e3040 62%,#1b2b45 85%,#192845 100%)"></div>
<svg class="a" style="left:0;top:694px" width="44" height="40" viewBox="0 0 44 40">
<path d="M11.5 13L19 12V19.4H11.5Z M20 11.8L28.5 10.6V19.4H20Z M11.5 20.4H19V27.8L11.5 26.8Z M20 20.4H28.5V29.2L20 28Z" fill="#fff"/></svg>
<div class="a" style="left:44px;top:694px;width:344px;height:40px;background:#f0f0f0;box-shadow:inset 0 1px 0 #c8c8c8"></div>
<svg class="a" style="left:52px;top:702px" width="24" height="24" viewBox="0 0 24 24"><circle cx="14.2" cy="10" r="5.6" fill="none" stroke="#222" stroke-width="1.4"/><path d="M10.2 14L4 20.2" stroke="#222" stroke-width="1.5"/></svg>
<div class="t" style="left:84.80px;top:707.75px;font:normal 15.00px/1 'Liberation Sans',sans-serif;color:#202020;transform:scaleX(0.9555);">Type here to search</div>
<svg class="a" style="left:390px;top:694px" width="400" height="40" viewBox="0 0 400 40">
<circle cx="22" cy="20" r="7.3" fill="none" stroke="#fff" stroke-width="1.9"/>
<g fill="none" stroke="#fff" stroke-width="1.4">
<path d="M62 12.5H74M62 26.5H74M63.5 15.5V23.5H72.5V15.5Z"/>
<path d="M77.5 12V14M77.5 18V26.5"/>
</g>
<rect x="76.3" y="15" width="2.5" height="2.5" fill="#fff"/>
<g transform="translate(121,20)">
<defs><linearGradient id="eg" x1="0" y1="1" x2="1" y2="0"><stop offset="0" stop-color="#0f5fb0"/><stop offset="0.5" stop-color="#1e90dd"/><stop offset="1" stop-color="#5ed66a"/></linearGradient></defs>
<circle r="12" fill="url(#eg)"/>
<path d="M-12 1C-11 -7 -4 -12 3 -12C9 -11 12 -6 12 -1C12 3 9 5 5 5C2 5 1 3 2 1C-2 -3 -9 -3 -12 1Z" fill="#2bb3d9" opacity="0.75"/>
<path d="M12 -1C12 4 8 6 4 5.5C0 5 -1 2 1 0C4 -2 8 -1 10 1C11 -1 11.5 -3 12 -1Z" fill="#58d46a"/>
<path d="M-5 3C-4 9 2 12 8 10C4 13 -6 12 -9 6Z" fill="#0a4a92"/>
<circle cx="3.5" cy="1.2" r="3.2" fill="#1466b8"/>
</g>
<g transform="translate(158,11)">
<path d="M0 2H8L10 4H22V17H0Z" fill="#f5c842"/>
<path d="M0 5H22V17H0Z" fill="#ffd95c"/>
<path d="M6 17V10H16V17H13V13H9V17Z" fill="#3a8fdc"/>
</g>
<g transform="translate(207,8)">
<path d="M7 7V4A5 5 0 0 1 17 4V7" fill="none" stroke="#fff" stroke-width="1.4"/>
<rect x="0" y="7" width="23" height="16" rx="1" fill="#fff"/>
<rect x="6.5" y="10" width="4.5" height="4.5" fill="#f35325"/>
<rect x="12" y="10" width="4.5" height="4.5" fill="#81bc06"/>
<rect x="6.5" y="15.5" width="4.5" height="4.5" fill="#05a6f0"/>
<rect x="12" y="15.5" width="4.5" height="4.5" fill="#ffba08"/>
</g>
<g transform="translate(255.5,10)">
<path d="M0 7L12 0L24 7V19H0Z" fill="#fff"/>
<path d="M0 7L24 8L12 12L16 16Z" fill="#1f2f3a"/>
</g>
<rect x="293" y="0" width="44" height="40" fill="#4b5961"/>
<rect x="337" y="0" width="3" height="40" fill="#38464e"/>
<rect x="293" y="38" width="44" height="2" fill="#76b9ed"/>
<g transform="translate(317,20)">
<circle r="12" fill="#db4437"/>
<path d="M0 0L12 0A12 12 0 0 1 -6 10.4Z" fill="#f4c20d"/>
<path d="M0 0L-6 10.4A12 12 0 0 1 -10.4 -6Z" fill="#0f9d58"/>
<circle r="5.2" fill="#fff"/><circle r="4.1" fill="#4285f4"/>
</g>
<rect x="150" y="38" width="40" height="2" fill="#76b9ed"/>
<rect x="346" y="38" width="40" height="2" fill="#76b9ed"/>
<g transform="translate(366,20)">
<circle cx="-3" cy="-3" r="8" fill="#1ba1e2"/><circle cx="3" cy="3" r="8" fill="#1ba1e2"/>
<circle r="10" fill="#1ba1e2"/>
<text x="0" y="5.5" font-family="Liberation Sans" font-weight="bold" font-size="15" fill="#fff" text-anchor="middle">S</text>
</g>
</svg>
<svg class="a" style="left:1100px;top:694px" width="240" height="40" viewBox="0 0 240 40">
<path d="M13.5 23L19 17.5L24.5 23" fill="none" stroke="#fff" stroke-width="1.4"/>
<g fill="none" stroke="#fff" stroke-width="1.3">
<path d="M35.5 15V18M38.5 15V18M34.5 18H39.5V21L37 23.5V26"/>
<rect x="40" y="18" width="10" height="7"/>
</g>
<rect x="41.5" y="19.5" width="7" height="4" fill="#fff"/>
<rect x="50" y="20" width="1.5" height="3" fill="#fff"/>
<g fill="none" stroke="#fff" stroke-width="1.2">
<path d="M62.5 26A11 11 0 0 1 73.5 15"/>
<path d="M65.5 26A8 8 0 0 1 73.5 18"/>
<path d="M68.5 26A5 5 0 0 1 73.5 21"/>
</g>
<circle cx="72.6" cy="25.3" r="1.3" fill="#fff"/>
<g fill="none" stroke="#fff" stroke-width="1.2">
<path d="M83.5 18H86.5L90.5 14V27L86.5 23H83.5Z"/>
<path d="M93 17.5A4 4 0 0 1 93 23.5"/>
<path d="M95.5 15A7.5 7.5 0 0 1 95.5 26"/>
<path d="M98 13A10 10 0 0 1 98 28"/>
</g>
<path d="M221 12.5H239V24H226L221 28Z" fill="#fff"/>
<path d="M224 15.5H236M224 18.5H236M224 21.5H233" stroke="#1a2842" stroke-width="1"/>
<circle cx="235.5" cy="29" r="7" fill="#2b2b2b" stroke="#444" stroke-width="1"/>
<text x="236" y="33.5" font-family="Liberation Sans" font-size="12" fill="#fff" text-anchor="middle">2</text>
</svg>
<div class="t" style="left:1209.60px;top:707.94px;font:normal 12.30px/1 'Liberation Sans',sans-serif;color:#fff;transform:scaleX(0.8262);">ENG</div>
<div class="t" style="left:1249.00px;top:699.04px;font:normal 12.30px/1 'Liberation Sans',sans-serif;color:#fff;transform:scaleX(0.9429);">07:04 AM</div>
<div class="t" style="left:1245.00px;top:716.94px;font:normal 12.30px/1 'Liberation Sans',sans-serif;color:#fff;transform:scaleX(0.9123);">06-02-2023</div>
<svg class="a" style="left:1089px;top:555px" width="16" height="24" viewBox="0 0 16 24">
<path d="M1 1V17.5L4.8 14L7.5 20.5L10 19.4L7.3 13.2H12.5Z" fill="#fff" stroke="#000" stroke-width="1" stroke-linejoin="round"/></svg>
</body></html>
